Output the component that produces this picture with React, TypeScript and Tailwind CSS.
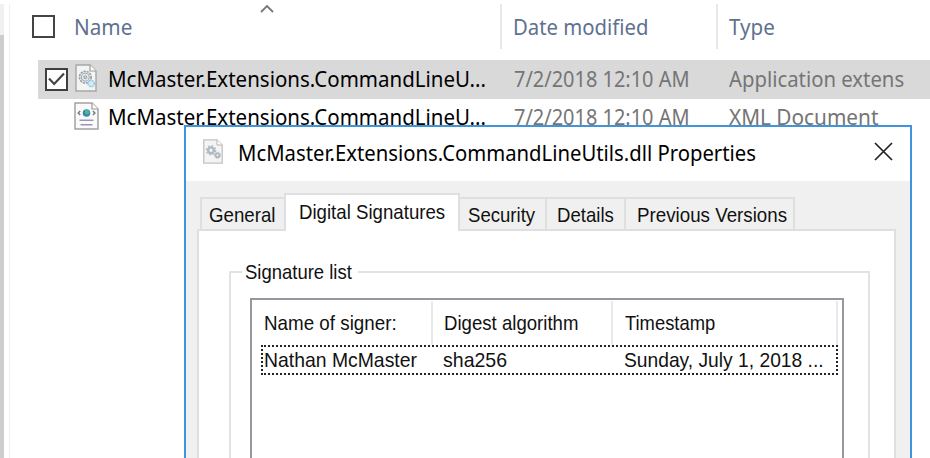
import type { ReactNode } from "react";

function DllIcon({ className }: { className: string }) {
  return (
    <svg viewBox="0 0 22 28" className={className} fill="none">
      <path d="M1 1H15L21 7V27H1Z" fill="#f3f4f4" stroke="#a6a6a6" strokeWidth="1.4" />
      <path d="M15 1V7H21" fill="#fff" stroke="#9a9a9a" strokeWidth="1.2" />
      <circle cx="10.3" cy="13.2" r="5.8" stroke="#98a1a7" strokeWidth="1.7" strokeDasharray="2.2 .9" />
      <circle cx="10.3" cy="13.2" r="3.9" fill="#e6ecef" stroke="#a3adb3" strokeWidth="1.1" />
      <circle cx="10.3" cy="13.2" r="1.5" fill="#c9d2d8" stroke="#98a1a7" />
      <circle cx="16.2" cy="19.5" r="3.1" fill="#d5ebf7" stroke="#9cc8e2" strokeWidth="1.6" strokeDasharray="1.8 .7" />
    </svg>
  );
}

function PropertiesIcon() {
  return (
    <svg viewBox="0 0 20 25" className="ml-[17px] mt-[12px] h-[25px] w-5 shrink-0" fill="none">
      <path d="M.8 .8H14L19.2 6V24.2H.8Z" fill="#f4f4f4" stroke="#c2c2c2" strokeWidth="1.3" />
      <path d="M14 .8V6H19.2" fill="#fff" stroke="#b4b4b4" />
      <circle cx="8" cy="11.3" r="2.9" stroke="#b0b9bf" strokeWidth="2.4" />
      <circle cx="8" cy="11.3" r="4.6" stroke="#b0b9bf" strokeWidth="1.3" strokeDasharray="1.8 1.8" />
      <circle cx="14.5" cy="16.3" r="1.9" stroke="#acb8c0" strokeWidth="1.8" />
      <circle cx="14.5" cy="16.3" r="3.1" stroke="#acb8c0" strokeDasharray="1.2 1.2" />
    </svg>
  );
}

function XmlIcon() {
  return (
    <svg viewBox="0 0 25 28" className="h-7 w-[25px]" fill="none">
      <path d="M1 1H18L24 7V27H1Z" fill="#fafafa" stroke="#a2a2a2" strokeWidth="1.5" />
      <path d="M18 1V7H24" fill="#fff" stroke="#999" strokeWidth="1.2" />
      <path d="M6.2 9L4.2 11L6.2 13M18.9 9L20.9 11L18.9 13" stroke="#777" strokeWidth="1.4" />
      <circle cx="12.5" cy="11" r="3.8" fill="#3a87a8" />
      <path d="M11 8Q15 7 15.5 11Q13 14 11 11Z" fill="#45b89a" />
      <path d="M5.5 18.2H19.5M6.5 22.7H18.5" stroke="#9a95b8" strokeWidth="1.5" />
    </svg>
  );
}

function Cell({ w, t, children }: { w: string; t: string; children: ReactNode }) {
  return (
    <div className={"shrink-0 whitespace-nowrap " + w}>
      <span className={"inline-block origin-left " + t}>{children}</span>
    </div>
  );
}

function Tab({ w, t, children }: { w: string; t: string; children: ReactNode }) {
  return (
    <div className={"h-[32px] shrink-0 whitespace-nowrap border-t-2 border-[#dfdfdf] bg-[#f0f0f0] leading-[31px] " + w}>
      <span className={"inline-block origin-left " + t}>{children}</span>
    </div>
  );
}

const file = "McMaster.Extensions.CommandLineU...";

export default function App() {
  return (
    <div className="relative flex h-[458px] w-[930px] overflow-hidden bg-white font-['Noto_Sans','Open_Sans',sans-serif] text-[21px] text-black">
      <div className="mt-1 w-1 shrink-0 bg-[#f0f0f0] pt-[31px]">
        <div className="h-full bg-[#cdcdcd]" />
      </div>
      <div className="ml-[5px] mt-1 w-px shrink-0 bg-[#efefef]" />
      <main className="flex min-w-0 grow flex-col">
        <header className="flex h-[60px] shrink-0 text-[#60708f]">
          <div className="ml-[22px] mt-[15px] size-[23px] shrink-0 border-2 border-[#444]" />
          <div className="ml-[19px] w-[186px] shrink-0 leading-[54px]">
            <span className="inline-block origin-left scale-x-[0.985]">Name</span>
          </div>
          <svg viewBox="0 0 14 9" className="mt-1 h-[9px] w-[14px] shrink-0" fill="none">
            <path d="M1 8L7 2L13 8" stroke="#777" strokeWidth="1.8" />
          </svg>
          <div className="ml-[226px] mt-1 h-[45px] w-[2px] shrink-0 bg-[#e8e8e8]" />
          <div className="ml-[11px] w-[203px] shrink-0 whitespace-nowrap leading-[54px]">
            <span className="inline-block origin-left scale-x-[0.967]">Date modified</span>
          </div>
          <div className="mt-1 h-[45px] w-[2px] shrink-0 bg-[#e8e8e8]" />
          <div className="ml-[11px] leading-[54px]">
            <span className="inline-block origin-left scale-x-[0.98]">Type</span>
          </div>
        </header>
        <div className="ml-7 flex h-[39px] shrink-0 items-center bg-[#d9d9d9] text-[#757575]">
          <div className="ml-[7px] size-[23px] shrink-0 border-2 border-[#3f3f3f] bg-white">
            <svg viewBox="0 0 19 19" className="size-[19px]" fill="none">
              <path d="M2 8.5L7.2 14L17 3.5" stroke="#444" strokeWidth="2.2" />
            </svg>
          </div>
          <DllIcon className="mb-[3px] ml-[7px] mr-[11px] h-7 w-[22px] shrink-0" />
          <Cell w="w-[406px] text-black" t="scale-x-[0.976]">{file}</Cell>
          <Cell w="w-[215px]" t="scale-x-[0.95]">7/2/2018 12:10 AM</Cell>
          <Cell w="w-[201px]" t="scale-x-[0.967]">Application extens</Cell>
        </div>
        <div className="flex h-[37px] shrink-0 items-center text-[#757575]">
          <div className="mb-[4px] ml-[64px] mr-[9px]">
            <XmlIcon />
          </div>
          <Cell w="w-[406px] text-black" t="scale-x-[0.976]">{file}</Cell>
          <Cell w="w-[215px]" t="scale-x-[0.95]">7/2/2018 12:10 AM</Cell>
          <Cell w="w-[201px]" t="scale-x-[0.99]">XML Document</Cell>
        </div>
      </main>

      <section className="absolute left-[184px] top-[125px] flex h-[340px] w-[728px] flex-col border-2 border-[#3f94dc] bg-[#f0f0f0]">
        <div className="flex h-[54px] shrink-0 bg-white">
          <PropertiesIcon />
          <div className="ml-[15px] w-[636px] shrink-0 whitespace-nowrap leading-[53px]">
            <span className="inline-block origin-left scale-x-[0.966]">McMaster.Extensions.CommandLineUtils.dll Properties</span>
          </div>
          <svg viewBox="0 0 19 19" className="mt-[15px] size-[19px] shrink-0" fill="none">
            <path d="M1 1L18 18M18 1L1 18" stroke="#222" strokeWidth="1.7" />
          </svg>
        </div>
        <div className="flex grow flex-col pl-[11px] pr-[14px] pt-3 font-['Liberation_Sans',Arial,sans-serif] text-[21px] text-[#111]">
          <div className="z-10 flex h-[36px] shrink-0 items-end pl-[3px]">
            <Tab w="w-[84px] border-l-2 pl-[7px]" t="scale-x-[0.89]">General</Tab>
            <div className="-mb-0.5 h-[38px] w-[176px] shrink-0 whitespace-nowrap border-x-2 border-t-2 border-[#dfdfdf] bg-white pl-[13px] leading-[33px]">
              <span className="inline-block origin-left scale-x-[0.888]">Digital Signatures</span>
            </div>
            <Tab w="w-[87px] border-r-2 pl-[8px]" t="scale-x-[0.885]">Security</Tab>
            <Tab w="w-[79px] border-r-2 pl-[10px]" t="scale-x-[0.885]">Details</Tab>
            <Tab w="w-[169px] border-r-2 pl-[11px]" t="scale-x-[0.893]">Previous Versions</Tab>
          </div>
          <div className="flex grow flex-col border-2 border-b-0 border-[#dfdfdf] bg-white pl-[30px] pr-[24px] pt-[28px]">
            <fieldset className="flex min-w-0 grow flex-col border-2 border-b-0 border-[#e2e2e2] pl-[19px] pr-[24px]">
              <legend className="ml-[-8px] h-[26px] w-[116px] whitespace-nowrap pl-[3px] leading-[26px]">
                <span className="inline-block origin-left scale-x-[0.88]">Signature list</span>
              </legend>
              <div className="mt-[13px] h-[180px] border-2 border-[#9499a0] pl-[9px] pr-[4px] pt-[1px]">
                <div className="flex h-[44px] whitespace-nowrap leading-[44px]">
                  <div className="w-[172px] shrink-0 border-r-2 border-[#eaeaea] pl-[3px]">
                    <span className="inline-block origin-left scale-x-[0.895]">Name of signer:</span>
                  </div>
                  <div className="w-[180px] shrink-0 border-r-2 border-[#eaeaea] pl-[11px]">
                    <span className="inline-block origin-left scale-x-[0.886]">Digest algorithm</span>
                  </div>
                  <div className="grow border-r-2 border-[#eaeaea] pl-[12px]">
                    <span className="inline-block origin-left scale-x-[0.875]">Timestamp</span>
                  </div>
                </div>
                <div className="flex h-[30px] whitespace-nowrap border-2 border-dotted border-[#222] leading-[26px]">
                  <Cell w="w-[180px] pl-[1px]" t="scale-x-[0.923]">Nathan McMaster</Cell>
                  <Cell w="w-[181px]" t="scale-x-[0.93]">sha256</Cell>
                  <Cell w="w-[200px]" t="scale-x-[0.916]">Sunday, July 1, 2018 ...</Cell>
                </div>
              </div>
            </fieldset>
          </div>
        </div>
      </section>
    </div>
  );
}
